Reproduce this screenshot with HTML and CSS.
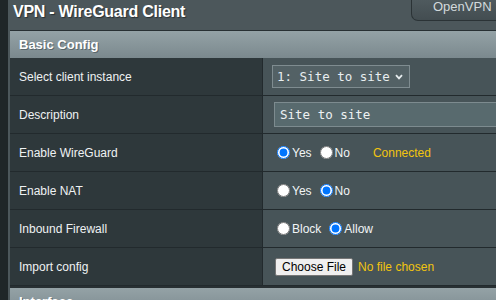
FILE: index.html
```html
<!DOCTYPE html>
<html lang="en">
<head>
  <meta charset="UTF-8" />
  <meta name="viewport" content="width=device-width, initial-scale=1.0"/>
  <title>VPN - WireGuard Client</title>
  <link rel="stylesheet" href="styles.css">
</head>
<body>
  <div class="page">
    <div class="head">
      <div class="title">VPN - WireGuard Client</div>
      <div class="tabs">
        <div class="tab">OpenVPN</div>
        <div class="tab">WireGuard</div>
      </div>
    </div>

    <!-- Basic Config -->
    <div class="section">
      <div class="section-title">Basic Config</div>

      <div class="row">
        <div class="label">Select client instance</div>
        <div class="value">
          <div class="select-box">
            <span>1: Site to site</span>
            <svg class="chevron" width="8" height="6" viewBox="0 0 8 6">
              <path d="M1 1.2 L4 4.4 L7 1.2" fill="none" stroke="#e6ecee" stroke-width="1.8"/>
            </svg>
          </div>
        </div>
      </div>

      <div class="row">
        <div class="label">Description</div>
        <div class="value">
          <input class="text-input" type="text" value="Site to site" />
        </div>
      </div>

      <div class="row">
        <div class="label">Enable WireGuard</div>
        <div class="value">
          <label class="opt"><input type="radio" name="wgon" checked />Yes</label>
          <label class="opt"><input type="radio" name="wgon" />No</label>
          <span class="status">Connected</span>
        </div>
      </div>

      <div class="row">
        <div class="label">Enable NAT</div>
        <div class="value">
          <label class="opt"><input type="radio" name="nat" />Yes</label>
          <label class="opt"><input type="radio" name="nat" checked />No</label>
        </div>
      </div>

      <div class="row">
        <div class="label">Inbound Firewall</div>
        <div class="value">
          <label class="opt wide"><input type="radio" name="fw" />Block</label>
          <label class="opt"><input type="radio" name="fw" checked />Allow</label>
        </div>
      </div>

      <div class="row">
        <div class="label">Import config</div>
        <div class="value">
          <button class="file-btn">Choose File</button>
          <span class="file-name">No file chosen</span>
        </div>
      </div>
    </div>

    <!-- Interface -->
    <div class="section next">
      <div class="section-title">Interface</div>
    </div>
  </div>
</body>
</html>
```

FILE: styles.css
```css
html, body {
  overflow: hidden;
}
body {
  margin: 0;
  font-family: Arial, "Liberation Sans", sans-serif;
  font-size: 12px;
  background: #4c575b;
  color: #fff;
  border-left: 8px solid #1f2628;
  min-height: 300px;
}
.page {
  width: 760px;
  padding-left: 2px;
}
.head {
  display: flex;
  height: 30px;
}
.title {
  width: 398px;
  padding: 3px 0 0 3px;
  font-size: 16px;
  line-height: 18px;
  font-weight: bold;
  letter-spacing: -0.25px;
  color: #fff;
  text-shadow: 1px 1px 1px #2a3134;
}
.tabs {
  display: flex;
}
.tab {
  width: 110px;
  height: 21px;
  box-sizing: border-box;
  padding-left: 21px;
  font-size: 13px;
  line-height: 14px;
  color: #d3dadc;
  background: linear-gradient(#4f5a5e, #434d51);
  border: 1px solid #2b3336;
  border-top: none;
  border-radius: 0 0 7px 7px;
}
.section {
  border-top: 1px solid #283033;
}
.section.next {
  border-top: 2px solid #283033;
}
.section-title {
  height: 27px;
  padding-left: 9px;
  font-size: 13px;
  line-height: 27px;
  font-weight: bold;
  color: #fff;
  text-shadow: 1px 1px 0 #5a676b;
  background: linear-gradient(#94a2a6, #7b898e);
}
.row {
  display: grid;
  grid-template-columns: 253px 1fr;
  height: 38px;
  box-sizing: border-box;
  border-bottom: 1px solid #222a2d;
}
.label {
  display: flex;
  align-items: center;
  padding-left: 9px;
  background: #2e383b;
  border-right: 1px solid #222a2d;
  color: #eef2f3;
}
.value {
  display: flex;
  align-items: center;
  padding-left: 9px;
  background: #475458;
}
.select-box {
  display: flex;
  align-items: center;
  justify-content: space-between;
  width: 138px;
  height: 23px;
  box-sizing: border-box;
  padding: 0 6px 0 4px;
  font-family: "DejaVu Sans Mono", monospace;
  font-size: 12.5px;
  color: #e8eef0;
  background: #536165;
  border: 1px solid #7f8c90;
}
.chevron {
  margin-top: 1px;
}
.text-input {
  width: 320px;
  height: 25px;
  box-sizing: border-box;
  margin: 0 0 0 2px;
  padding: 0 5px;
  font-family: "DejaVu Sans Mono", monospace;
  font-size: 12.5px;
  color: #eef2f3;
  background: #586a6e;
  border: 1px solid #7d8b8f;
  outline: none;
}
.opt {
  display: inline-flex;
  align-items: center;
  margin-right: 3px;
  color: #f2f5f6;
}
.opt.wide {
  margin-right: 3px;
}
.opt input {
  width: 13px;
  height: 13px;
  margin: 0 2px 0 5px;
}
.status {
  margin-left: 20px;
  color: #f2c40f;
}
.file-btn {
  margin-left: 3px;
  height: 18px;
  padding: 0 6px;
  font-family: Arial, "Liberation Sans", sans-serif;
  font-size: 12px;
  color: #000;
  background: #efefef;
  border: 1px solid #767676;
  border-radius: 2px;
}
.file-name {
  margin-left: 5px;
  color: #f2c40f;
}
```
